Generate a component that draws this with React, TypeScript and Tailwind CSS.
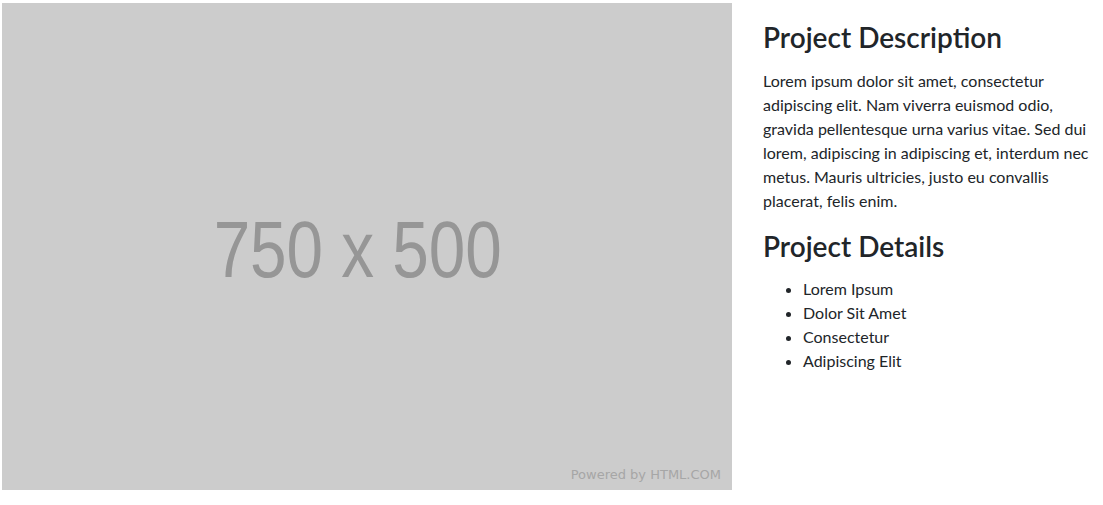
const details = ["Lorem Ipsum", "Dolor Sit Amet", "Consectetur", "Adipiscing Elit"];

function Placeholder() {
  return (
    <div className="relative flex h-[487px] w-[730px] shrink-0 items-center justify-center bg-[#cccccc] pr-[19px] pt-[7px]">
      <span className="origin-center scale-x-[0.82] whitespace-nowrap font-['Liberation_Sans',Arial,sans-serif] text-[80px] leading-none text-[#969696]">
        750 x 500
      </span>
      <span className="absolute bottom-[8px] right-[11px] font-['DejaVu_Sans',Verdana,sans-serif] text-[13px] leading-[15px] text-[#a6a6a6]">
        Powered by HTML.COM
      </span>
    </div>
  );
}

export default function App() {
  return (
    <div className="flex min-h-[505px] bg-white font-['Lato',sans-serif] text-[#212529]">
      <div className="pl-[2px] pt-[3px]">
        <Placeholder />
      </div>
      <div className="ml-[31px] w-[340px] pt-[20px]">
        <h3 className="mb-[15px] text-[28px] font-semibold leading-[34px]">Project Description</h3>
        <p className="text-[16px] leading-[24px]">
          Lorem ipsum dolor sit amet, consectetur adipiscing elit. Nam viverra euismod odio, gravida
          pellentesque urna varius vitae. Sed dui lorem, adipiscing in adipiscing et, interdum nec
          metus. Mauris ultricies, justo eu convallis placerat, felis enim.
        </p>
        <h3 className="mb-[14px] mt-[16px] text-[28px] font-semibold leading-[34px]">Project Details</h3>
        <ul className="list-disc pl-[40px] text-[16px] leading-[24px]">
          {details.map((item) => (
            <li key={item}>{item}</li>
          ))}
        </ul>
      </div>
    </div>
  );
}
